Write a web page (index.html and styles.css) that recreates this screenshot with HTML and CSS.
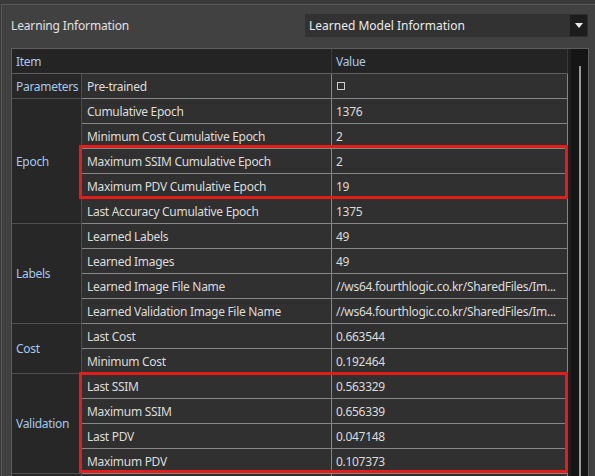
FILE: index.html
```html
<!DOCTYPE html>
<html>
<head>
<meta charset="utf-8">
<link rel="stylesheet" href="styles.css">
</head>
<body>
<div class="panel">
  <div class="panel-head">
    <div class="title">Learning Information</div>
    <div class="dropdown">
      <span class="dropdown-text">Learned Model Information</span>
      <span class="dropdown-btn"><span class="arrow"></span></span>
    </div>
  </div>
  <div class="frame">
    <div class="grid">
      <div class="hcell hitem">Item</div>
      <div class="hcell hvalue">Value</div>

      <div class="group span1">Parameters</div>
      <div class="item">Pre-trained</div>
      <div class="value"><span class="check"></span></div>

      <div class="group span5">Epoch</div>
      <div class="item">Cumulative Epoch</div>
      <div class="value">1376</div>
      <div class="item">Minimum Cost Cumulative Epoch</div>
      <div class="value">2</div>
      <div class="item">Maximum SSIM Cumulative Epoch</div>
      <div class="value">2</div>
      <div class="item">Maximum PDV Cumulative Epoch</div>
      <div class="value">19</div>
      <div class="item">Last Accuracy Cumulative Epoch</div>
      <div class="value">1375</div>

      <div class="group span4">Labels</div>
      <div class="item">Learned Labels</div>
      <div class="value">49</div>
      <div class="item">Learned Images</div>
      <div class="value">49</div>
      <div class="item">Learned Image File Name</div>
      <div class="value">//ws64.fourthlogic.co.kr/SharedFiles/Im...</div>
      <div class="item">Learned Validation Image File Name</div>
      <div class="value">//ws64.fourthlogic.co.kr/SharedFiles/Im...</div>

      <div class="group span2">Cost</div>
      <div class="item">Last Cost</div>
      <div class="value">0.663544</div>
      <div class="item">Minimum Cost</div>
      <div class="value">0.192464</div>

      <div class="group span4">Validation</div>
      <div class="item">Last SSIM</div>
      <div class="value">0.563329</div>
      <div class="item">Maximum SSIM</div>
      <div class="value">0.656339</div>
      <div class="item">Last PDV</div>
      <div class="value">0.047148</div>
      <div class="item">Maximum PDV</div>
      <div class="value">0.107373</div>

      <div class="group span1"></div>
      <div class="item"></div>
      <div class="value"></div>

      <div class="mark mark-epoch"></div>
      <div class="mark mark-valid"></div>
    </div>
    <div class="scrollbar"><div class="thumb"></div></div>
  </div>
</div>
</body>
</html>
```

FILE: styles.css
```css
html, body {
  margin: 0;
  padding: 0;
  background: #3a3a3a;
  height: 476px;
  overflow: hidden;
  font-family: "Noto Sans", "Open Sans", sans-serif;
  font-size: 12px;
}

.panel {
  margin: 4px 0 0 1px;
  border-top: 1px solid #575757;
  border-left: 1px solid #575757;
  background: #414141;
  height: 471px;
}

.panel-head {
  display: flex;
  align-items: flex-start;
  height: 43px;
  padding: 9px 7px 0 9px;
  box-sizing: border-box;
}

.title {
  flex: 1;
  color: #e2e2e2;
  font-size: 12px;
  letter-spacing: -0.15px;
  line-height: 23px;
}

.dropdown {
  width: 283px;
  height: 23px;
  display: flex;
  background: #323232;
}

.dropdown-text {
  flex: 1;
  color: #ececec;
  font-size: 12px;
  line-height: 23px;
  padding-left: 4px;
}

.dropdown-btn {
  width: 19px;
  background: #1c1c1c;
  border: 1px solid #2f2f2f;
  box-sizing: border-box;
  display: flex;
  align-items: center;
  justify-content: center;
}

.arrow {
  width: 0;
  height: 0;
  border-left: 4.5px solid transparent;
  border-right: 4.5px solid transparent;
  border-top: 5px solid #ececec;
}

.frame {
  margin-left: 9px;
  width: 578px;
  height: 430px;
  box-sizing: border-box;
  border: 1px solid #5d5d5d;
  border-bottom: none;
  display: flex;
  overflow: hidden;
}

.grid {
  position: relative;
  display: grid;
  grid-template-columns: 70px 250px 236px;
  grid-auto-rows: 25px;
  width: 556px;
  flex: none;
  align-content: start;
  letter-spacing: -0.3px;
}

.grid > div {
  box-sizing: border-box;
  display: flex;
  align-items: center;
  white-space: nowrap;
  overflow: hidden;
}

.hcell {
  background: #242424;
  color: #a6c9ec;
  border-bottom: 1px solid #5f5f5f;
}

.hitem {
  grid-column: 1 / 3;
  padding-left: 4px;
  border-right: 1px solid #3c3c3c;
}

.hvalue {
  padding-left: 4px;
  border-right: 1px solid #3a3a3a;
}

.group {
  grid-column: 1;
  background: #272727;
  color: #a6c9ec;
  padding-left: 4px;
  border-right: 1px solid #4e4e4e;
  border-bottom: 1px solid #4e4e4e;
}

.span1 { grid-row: span 1; }
.span2 { grid-row: span 2; }
.span4 { grid-row: span 4; }
.span5 { grid-row: span 5; }

.item, .value {
  background: #303030;
  color: #dcdcdc;
  border-right: 1px solid #858585;
  border-bottom: 1px solid #858585;
}

.item {
  grid-column: 2;
  padding-left: 5px;
}

.value {
  grid-column: 3;
  padding-left: 4px;
}

.check {
  display: inline-block;
  width: 8px;
  height: 8px;
  box-sizing: border-box;
  border: 1px solid #d0d0d0;
  margin-left: 1px;
}

.grid > .mark {
  position: absolute;
  left: 67px;
  width: 489px;
  border: 3px solid #e31c1c;
  background: transparent;
}

.mark-epoch {
  top: 96px;
  height: 54px;
}

.mark-valid {
  top: 323px;
  height: 101px;
}

.scrollbar {
  position: relative;
  flex: 1;
  background: #151515;
  border-left: 3px solid #1f1f1f;
}

.thumb {
  position: absolute;
  left: 8px;
  top: 17px;
  bottom: 0;
  width: 2px;
  background: #9a9a9a;
}
```
